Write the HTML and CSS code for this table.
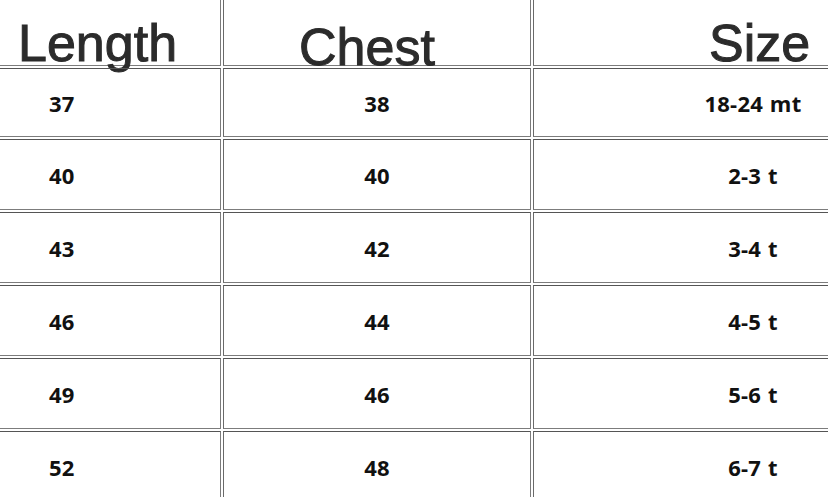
FILE: index.html
```html
<!DOCTYPE html>
<html lang="en">
<head>
<meta charset="utf-8">
<title>Size chart</title>
<link rel="stylesheet" href="styles.css">
</head>
<body>
<div class="chart">
  <div class="cell head c1"><span>Length</span></div>
  <div class="cell head c2"><span>Chest</span></div>
  <div class="cell head c3"><span>Size</span></div>

  <div class="cell c1">37</div><div class="cell c2">38</div><div class="cell c3">18-24 mt</div>
  <div class="cell c1">40</div><div class="cell c2">40</div><div class="cell c3">2-3 t</div>
  <div class="cell c1">43</div><div class="cell c2">42</div><div class="cell c3">3-4 t</div>
  <div class="cell c1">46</div><div class="cell c2">44</div><div class="cell c3">4-5 t</div>
  <div class="cell c1">49</div><div class="cell c2">46</div><div class="cell c3">5-6 t</div>
  <div class="cell c1">52</div><div class="cell c2">48</div><div class="cell c3">6-7 t</div>
</div>
</body>
</html>
```
FILE: styles.css
```css
html, body {
  margin: 0;
  padding: 0;
  background: #ffffff;
  overflow: hidden;
  width: 828px;
  height: 497px;
}

.chart {
  display: grid;
  grid-template-columns: 321px 308px 440px;
  grid-template-rows: 76px 69px 71px 71px 71px 71px 71px;
  gap: 2px;
  margin-top: -10px;
  margin-left: -100px;
  width: 1073px;
}

.cell {
  box-sizing: border-box;
  border: 1px solid #7c7c7c;
  border-top-color: #555555;
  border-left-color: #6a6a6a;
  display: flex;
  align-items: center;
  font-family: "Open Sans", "DejaVu Sans", sans-serif;
  font-weight: 700;
  font-size: 22px;
  word-spacing: 1px;
  letter-spacing: 0.2px;
  color: #111111;
  line-height: 1;
}

.cell.c1 { padding-left: 148px; }
.cell.c2 { justify-content: center; }
.cell.c3 { justify-content: center; }

.cell.head {
  align-items: flex-start;
  font-family: "Liberation Sans", Arial, sans-serif;
  font-weight: 400;
  font-size: 52px;
  line-height: 52px;
  letter-spacing: 0;
  word-spacing: 0;
  color: #2b2b2b;
  -webkit-text-stroke: 1px #2b2b2b;
  justify-content: flex-start;
}

.cell.head.c1 { padding-left: 117px; padding-top: 26px; }
.cell.head.c2 { padding-left: 75px; padding-top: 30px; }
.cell.head.c3 { padding-left: 175px; padding-top: 26px; }

.cell.head span {
  white-space: nowrap;
}
```
